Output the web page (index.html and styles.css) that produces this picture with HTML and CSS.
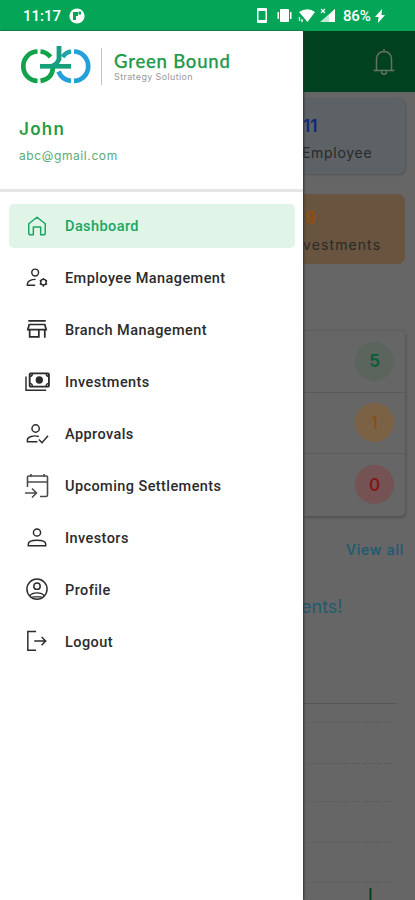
FILE: index.html
```html
<!DOCTYPE html>
<html lang="en">
<head>
<meta charset="utf-8">
<title>Green Bound</title>
<link rel="stylesheet" href="styles.css">
</head>
<body>
<header class="status">
  <span class="time">11:17</span>
  <svg class="app" width="16" height="16" viewBox="0 0 16 16"><circle cx="8" cy="8" r="7.6" fill="#fff"/><path d="M4 12V4h5v4H7v4z" fill="#04a556"/><path d="M9.500 3.500h2.500v3H9.500z" fill="#04a556"/></svg>
  <svg class="sys" width="82" height="18" viewBox="0 0 82 18" fill="#fff">
    <path fill-rule="evenodd" d="M2 1h8q1 0 1 1v13q0 1-1 1H2q-1 0-1-1V2q0-1 1-1zM2.500 4v9h7V4z"/>
    <path d="M25 2h7q1 0 1 1v11q0 1-1 1h-7q-1 0-1-1V3q0-1 1-1zM21.500 5H23v7h-1.500zM34 5h1.500v7H34z"/>
    <path d="M43 5q8.500-5.500 16 0l-7.500 10z"/><path d="M43.500 10v4M46 12v3" stroke="#fff" stroke-width="1.300"/>
    <path d="M79 2v13H64z" opacity=".75"/><path d="M79 2v13h-6V8z"/><path d="M65 2l4 4m0-4l-4 4" stroke="#fff" stroke-width="1.200"/>
  </svg>
  <span class="pct">86%</span>
  <svg class="bolt" width="12" height="16" viewBox="0 0 12 16"><path d="M8 1L1 9h3.500L4 15l7-8H7.500z" fill="#fff"/></svg>
</header>
<main class="screen">
  <aside class="drawer">
    <section class="profile">
      <div class="brand">
        <svg width="72" height="40" viewBox="0 0 72 40" fill="none" stroke-width="4.700">
          <path d="M17.500 5.500A14.200 14.700 0 0 0 17.500 34.900" stroke="#12a24b"/>
          <path d="M20.500 5.500Q26.500 6 30.500 11" stroke="#12a24b"/>
          <path d="M20.500 34.900Q32.500 33 33 21" stroke="#12a24b"/>
          <path d="M20 20.300h31" stroke="#15a07a"/>
          <path d="M39 0v13M39.500 12Q37 19 32 20" stroke="#189e82" stroke-width="4.800"/>
          <path d="M42.500 11Q46 6 51 5.500" stroke="#20a4a8"/>
          <path d="M54 5.500A14.200 14.700 0 0 1 54 34.900" stroke="#249fda"/>
          <path d="M38.500 25.500Q42 34 51 34.900" stroke="#249fda"/>
        </svg>
        <div class="words"><b>Green Bound</b><small>Strategy Solution</small></div>
      </div>
      <h1>John</h1>
      <p>abc@gmail.com</p>
    </section>
    <nav class="menu">
      <a class="item active"><svg viewBox="0 0 24 24"><path d="M3 19.500V9.500L12 2.500 21 9.500v10q0 2-2 2h-3V13H8v8.500H5q-2 0-2-2z" stroke-linejoin="round"/></svg><span>Dashboard</span></a>
      <a class="item"><svg viewBox="0 0 24 24"><circle cx="10" cy="6" r="3.700"/><path d="M10 20H1.500V18.500c0-3 4-5 9-5"/><circle cx="19" cy="16.500" r="3"/><path d="M19 12v2m0 5v2.500m-4-7l1.500 1m5 2.500l1.500 1m0-4.500l-1.500 1m-5 2.500l-1.500 1"/></svg><span>Employee Management</span></a>
      <a class="item"><svg viewBox="0 0 24 24"><path d="M2.500 2h19M3.500 6h17L22 11.500H2zM4 11.500V19.500h10v-8M20.500 11.500V20.500" stroke-width="1.900"/></svg><span>Branch Management</span></a>
      <a class="item"><svg class="wide" viewBox="0 0 28 24"><path d="M2 6v15h22"/><rect x="6" y="2.500" width="21" height="14.500" rx="1" stroke-width="2"/><circle cx="16.500" cy="9.800" r="3.200" fill="currentColor"/><path d="M6 6q3 0 3-3.500M27 6q-3 0-3-3.500M6 13.500q3 0 3 3.500M27 13.500q-3 0-3 3.500"/></svg><span>Investments</span></a>
      <a class="item"><svg viewBox="0 0 24 24"><circle cx="10.500" cy="6" r="4"/><path d="M12.500 20.500H1.500V18.500c0-3.500 7-5.500 12.500-3.800M14 18l3.500 3.500 6.500-7.500"/></svg><span>Approvals</span></a>
      <a class="item"><svg class="cal" viewBox="0 0 24 24" opacity=".85"><path d="M2.500 13V3q0-1 1-1h18q1 0 1 1v18q0 1.500-1.500 1.500H15M2.500 8h20M6 0v3M19 0v3M0 19h11M7 14.500l4.500 4.500L7 23.500"/></svg><span>Upcoming Settlements</span></a>
      <a class="item"><svg viewBox="0 0 24 24"><circle cx="12" cy="6" r="3.900"/><path d="M2.500 20.500V18.500c0-5.500 19-5.500 19 0v2z"/></svg><span>Investors</span></a>
      <a class="item"><svg viewBox="0 0 24 24"><circle cx="12" cy="11" r="11"/><circle cx="12" cy="7.800" r="3.500"/><path d="M4 18.500c3-4.500 13-4.500 16 0M7 19.500h10"/></svg><span>Profile</span></a>
      <a class="item"><svg viewBox="0 0 24 24"><path d="M11 .5H2V21h9M9 11h12.500M17 6.500l4.500 4.500-4.500 4.500"/></svg><span>Logout</span></a>
    </nav>
  </aside>
  <div class="page">
    <div class="bar"><svg width="24" height="28" viewBox="0 0 24 28" fill="none" stroke="#66735f" stroke-width="1.500"><path d="M1.500 22.500h21M4.500 22V11c0-10 15-10 15 0v11M12 1v3M9.500 23.500c0 3.500 5 3.500 5 0"/></svg></div>
    <div class="tile blue"><b>11</b><span>Employee</span></div>
    <div class="tile orange"><b>9</b><span>vestments</span></div>
    <div class="counts">
      <div class="row"><i class="g">5</i></div>
      <div class="row"><i class="o">1</i></div>
      <div class="row"><i class="r">0</i></div>
    </div>
    <div class="all">View all</div>
    <div class="head">ents!</div>
    <svg class="chart" width="112" height="200" viewBox="0 0 112 200" fill="none"><path d="M0 3.500h94" stroke="#565656"/><path d="M4 22.500h88M4 63.500h88M4 101.500h88M4 142.500h88M4 182.500h88" stroke="#5e5e5e" stroke-dasharray="9 2"/><path d="M67.500 188v12" stroke="#06401f" stroke-width="2"/></svg>
  </div>
</main>
</body>
</html>
```
FILE: styles.css
```css
* { box-sizing: border-box; }
body { margin: 0; width: 415px; height: 900px; overflow: hidden; display: flex; flex-direction: column; font-family: Roboto, "Liberation Sans", sans-serif; }
.status { height: 31px; flex: none; background: #04a556; color: #fff; display: flex; align-items: center; padding: 1px 0 0 23px; font-size: 15px; font-weight: 500; }
.time { width: 46px; letter-spacing: 0; }
.sys { margin-left: 171px; }
.pct { margin-left: 5px; width: 31px; letter-spacing: -.2px; }
.screen { flex: 1; min-height: 0; display: flex; }
.drawer { width: 303px; flex: none; background: #fff; z-index: 1; box-shadow: 1px 0 2px #333; }
.profile { height: 161px; border-bottom: 3px solid #e6e6e6; padding: 15px 0 0 20px; font-family: Inter, "Open Sans", sans-serif; }
.brand { display: flex; height: 40px; }
.words { display: flex; flex-direction: column; margin: 2px 0 0 9px; padding-left: 12px; height: 37px; border-left: 1px solid #c5c5c5; }
.words b { font: 500 18.500px/22px Lato, sans-serif; letter-spacing: .8px; color: #22994b; white-space: nowrap; margin-top: 2px; -webkit-text-stroke: .25px #22994b; }
.words small { font: 9px/9px Inter, sans-serif; letter-spacing: .36px; color: #999; white-space: nowrap; }
h1 { font-size: 17px; line-height: 22px; font-weight: 600; letter-spacing: 1.3px; color: #259b43; margin: 32px 0 0 -1px; }
.profile p { font-size: 12px; line-height: 16px; color: #58ab77; margin: 8px 0 0 -1px; letter-spacing: .6px; }
.menu { padding: 12px 8px 0 9px; display: flex; flex-direction: column; gap: 8px; }
.item { height: 44px; flex: none; border-radius: 5px; display: flex; align-items: center; padding-left: 16px; font-size: 14.500px; font-weight: 500; letter-spacing: .42px; color: #2b2b2b; }
.item.active { background: #e0f4e8; color: #17a761; }
.item svg { width: 24px; height: 22px; margin-right: 16px; fill: none; stroke: currentColor; stroke-width: 1.600; overflow: visible; }
.item .wide { width: 26px; margin: 0 15px 0 -1px; }
.item .cal { height: 24px; }
.page { width: 112px; background: #666; overflow: hidden; font-family: Inter, "Open Sans", sans-serif; display: flex; flex-direction: column; }
.page > * { flex: none; }
.bar { height: 61px; background: #00421f; padding: 17px 0 0 69px; }
.tile { width: 102px; display: flex; flex-direction: column; border-radius: 0 7px 7px 0; font-size: 14px; color: #292929; overflow: hidden; }
.tile b { font-size: 17px; line-height: 20px; font-weight: 600; }
.tile span { line-height: 18px; margin-top: 8px; white-space: nowrap; }
.blue { height: 76px; margin-top: 6px; background: #5d6266; padding-top: 18px; box-shadow: 1px 1px 2px #555; }
.blue b { color: #10277a; }
.blue span { margin-left: -1px; letter-spacing: .7px; }
.orange { height: 70px; margin-top: 20px; background: #69543f; padding-top: 14px; }
.orange b { color: #954e0c; margin-left: 2px; }
.orange span { letter-spacing: 1.1px; }
.counts { height: 186px; width: 102px; margin-top: 66px; border-top: 1px solid #5d5d5d; border-radius: 0 5px 5px 0; box-shadow: 1px 2px 3px #505050; }
.row { height: 61.500px; display: flex; align-items: center; justify-content: flex-end; padding-right: 11px; border-bottom: 1px solid #5a5a5a; }
.row:last-child { border-bottom: 0; }
.row i { width: 39px; height: 39px; border-radius: 50%; display: grid; place-items: center; font-style: normal; font-weight: 600; font-size: 17px; }
.g { background: #5b645d; color: #075f36; }
.o { background: #7b6244; color: #8b4c0d; }
.row .o { font-weight: 400; }
.r { background: #755354; color: #851718; }
.all { color: #185a73; font-size: 14px; line-height: 20px; margin: 24px 0 0 43px; letter-spacing: .8px; font-weight: 500; white-space: nowrap; }
.head { color: #205c6e; font-size: 18px; line-height: 24px; margin: 35px 0 0 -2px; }
.chart { margin-top: 81px; }
```
